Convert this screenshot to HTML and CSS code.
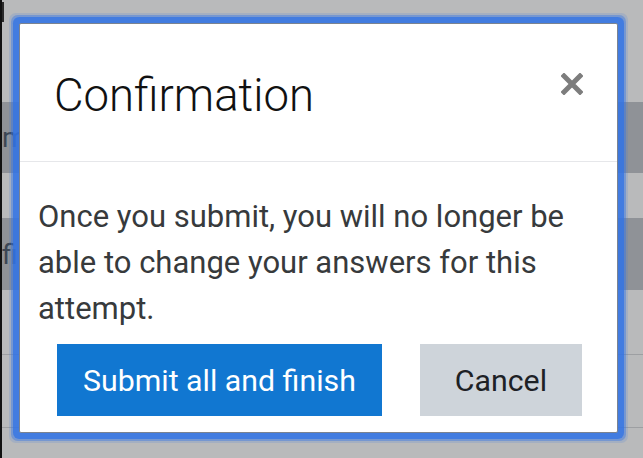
FILE: index.html
```html
<!DOCTYPE html>
<html lang="en">
<head>
<meta charset="utf-8">
<title>Confirmation</title>
<link rel="stylesheet" href="styles.css">
</head>
<body>
<div class="page">
  <div class="cursor"></div>
  <div class="row row-first"><span class="row-text">m</span></div>
  <div class="row row-second"><span class="row-text">fir</span></div>
  <div class="rule rule-a"></div>
  <div class="rule rule-b"></div>
</div>

<div class="modal" role="dialog" aria-labelledby="modal-title">
  <div class="modal-header">
    <h5 class="modal-title" id="modal-title">Confirmation</h5>
    <button class="close" type="button" aria-label="Close">
      <svg width="22" height="22" viewBox="0 0 22 22" aria-hidden="true">
        <path d="M3 3 L19 19 M19 3 L3 19" stroke="#7d7d7d" stroke-width="5" stroke-linecap="square" fill="none"/>
      </svg>
    </button>
  </div>
  <div class="modal-body">
    <p>Once you submit, you will no longer be able to change your answers for this attempt.</p>
  </div>
  <div class="modal-footer">
    <button class="btn btn-primary" type="button">Submit all and finish</button>
    <button class="btn btn-secondary" type="button">Cancel</button>
  </div>
</div>
</body>
</html>
```

FILE: styles.css
```css
html, body {
  margin: 0;
  padding: 0;
}

body {
  width: 643px;
  height: 458px;
  background: #b9babb;
  font-family: Roboto, "Liberation Sans", Arial, sans-serif;
  position: relative;
  overflow: hidden;
}

.page {
  height: 458px;
  border-left: 2px solid #111;
  box-sizing: border-box;
  display: flex;
  flex-direction: column;
}

.cursor {
  width: 2px;
  height: 20px;
  margin-top: 2px;
  background: #2a2a2a;
}

.row {
  height: 72px;
  background: #8f9297;
  display: flex;
  align-items: center;
}

.row-first {
  margin-top: 80px;
  height: 71px;
}

.row-second {
  margin-top: 45px;
}

.row-text {
  font-size: 28px;
  color: #3c4654;
  margin-left: 0;
  white-space: nowrap;
}

.rule {
  height: 1px;
  background: #9d9fa2;
}

.rule-a {
  margin-top: 64px;
}

.rule-b {
  margin-top: 72px;
}

.modal {
  position: absolute;
  left: 19px;
  top: 23px;
  width: 599px;
  height: 410px;
  box-sizing: border-box;
  background: #fff;
  border: 1px solid #7b8390;
  border-radius: 2px;
  box-shadow: 0 0 0 6px rgba(50, 115, 230, 0.75), 0 0 0 8px rgba(50, 115, 230, 0.4), 0 0 0 10px rgba(50, 115, 230, 0.15);
  display: flex;
  flex-direction: column;
}

.modal-header {
  height: 138px;
  box-sizing: border-box;
  border-bottom: 1px solid #e6e7ea;
  display: flex;
  align-items: flex-start;
  justify-content: space-between;
  padding: 44px 34px 0 34px;
}

.modal-title {
  margin: 0;
  font-size: 45.5px;
  font-weight: 300;
  color: #111;
  line-height: 56px;
}

.close {
  border: 0;
  background: none;
  padding: 0;
  margin-top: 5px;
  width: 22px;
  height: 22px;
  cursor: pointer;
}

.close svg {
  display: block;
}

.modal-body {
  padding: 32px 18px 0 18px;
}

.modal-body p {
  margin: 0;
  font-size: 31px;
  line-height: 46px;
  color: #373a3c;
}

.modal-footer {
  display: flex;
  gap: 38px;
  padding: 12px 0 0 37px;
}

.btn {
  height: 72px;
  border: 0;
  border-radius: 0;
  font-family: inherit;
  font-size: 30.3px;
  padding: 0 26px;
}

.btn-primary {
  background: #1177d1;
  color: #fff;
}

.btn-secondary {
  background: #ced4da;
  color: #1d2125;
  padding: 0 35px;
}
```
